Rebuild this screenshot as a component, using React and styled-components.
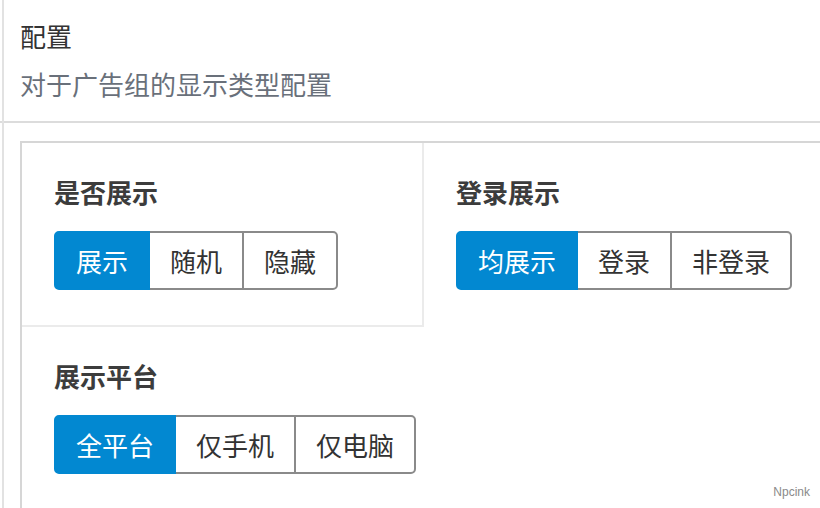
import React, { useState } from 'react';
import styled, { createGlobalStyle } from 'styled-components';

const GlobalStyle = createGlobalStyle`
  html, body {
    margin: 0;
    padding: 0;
    background: #fff;
    font-family: "Noto Sans CJK SC", "Noto Sans", sans-serif;
    color: #333;
  }
`;

const Page = styled.div`
  position: relative;
  width: 820px;
  height: 508px;
  overflow: hidden;
  box-sizing: border-box;
  background: #fff;
`;

const LeftRule = styled.div`
  position: absolute;
  left: 2px;
  top: 0;
  bottom: 0;
  width: 2px;
  background: #e2e2e2;
`;

const Header = styled.header`
  padding: 18px 0 19px 20px;
  border-bottom: 2px solid #dcdcdc;
  display: flex;
  flex-direction: column;
  gap: 12px;
`;

const Title = styled.h1`
  margin: 0;
  font-size: 26px;
  line-height: 36px;
  font-weight: 400;
  color: #333;
`;

const Subtitle = styled.p`
  margin: 0;
  font-size: 26px;
  line-height: 36px;
  color: #69707a;
`;

const Body = styled.div`
  padding: 18px 0 0 20px;
`;

const Card = styled.div`
  display: grid;
  grid-template-columns: 402px 402px;
  border-top: 2px solid #d6d6d6;
  border-left: 2px solid #d6d6d6;
  width: 820px;
`;

const Cell = styled.section`
  padding: 31px 0 35px 32px;
  border-right: ${p => (p.$right ? '2px solid #ebebeb' : 'none')};
  border-bottom: ${p => (p.$bottom ? '2px solid #ebebeb' : 'none')};
  display: flex;
  flex-direction: column;
  gap: 21px;
`;

const Heading = styled.h2`
  margin: 0;
  font-size: 26px;
  line-height: 36px;
  font-weight: 700;
  color: #3c3c3c;
`;

const Group = styled.div`
  display: flex;
`;

const Segment = styled.button`
  position: relative;
  z-index: ${p => (p.$active ? 1 : 0)};
  box-sizing: border-box;
  height: 59px;
  padding: 0 20px;
  margin-left: -2px;
  border: 2px solid ${p => (p.$active ? '#0288d1' : '#8a8a8a')};
  background: ${p => (p.$active ? '#0288d1' : '#fff')};
  color: ${p => (p.$active ? '#fff' : '#333')};
  font-family: "Noto Sans CJK SC", "Noto Sans", sans-serif;
  font-size: 26px;
  line-height: 1;
  cursor: pointer;

  &:first-child {
    margin-left: 0;
    border-radius: 5px 0 0 5px;
  }

  &:last-child {
    border-radius: 0 5px 5px 0;
  }
`;

const Watermark = styled.span`
  position: absolute;
  right: 10px;
  bottom: 9px;
  font-family: "Liberation Sans Narrow", "Liberation Sans", sans-serif;
  font-size: 12px;
  color: #8a8a8a;
`;

const SegmentGroup = ({ options }) => {
  const [active, setActive] = useState(0);
  return (
    <Group>
      {options.map((o, i) => (
        <Segment key={o} $active={i === active} onClick={() => setActive(i)}>
          {o}
        </Segment>
      ))}
    </Group>
  );
};

const App = () => (
  <Page>
    <GlobalStyle />
    <LeftRule />
    <Header>
      <Title>配置</Title>
      <Subtitle>对于广告组的显示类型配置</Subtitle>
    </Header>
    <Body>
      <Card>
        <Cell $right $bottom>
          <Heading>是否展示</Heading>
          <SegmentGroup options={['展示', '随机', '隐藏']} />
        </Cell>
        <Cell>
          <Heading>登录展示</Heading>
          <SegmentGroup options={['均展示', '登录', '非登录']} />
        </Cell>
        <Cell>
          <Heading>展示平台</Heading>
          <SegmentGroup options={['全平台', '仅手机', '仅电脑']} />
        </Cell>
      </Card>
    </Body>
    <Watermark>Npcink</Watermark>
  </Page>
);

export default App;
